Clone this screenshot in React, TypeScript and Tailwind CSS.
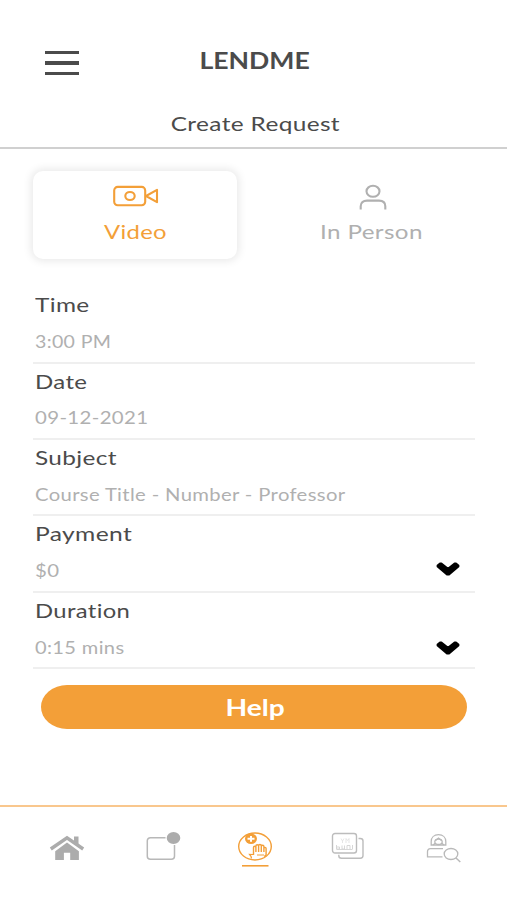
import React, { useState } from 'react';

const fields = [
  { label: 'Time', value: '3:00 PM', labelScale: 'scale-x-[1.22]', valueScale: 'scale-x-[1.15]', select: false, iconClass: '' },
  { label: 'Date', value: '09-12-2021', labelScale: 'scale-x-[1.2]', valueScale: 'scale-x-[1.2]', select: false, iconClass: '' },
  { label: 'Subject', value: 'Course Title - Number - Professor', labelScale: 'scale-x-[1.22]', valueScale: 'scale-x-[1.19]', select: false, iconClass: '' },
  { label: 'Payment', value: '$0', labelScale: 'scale-x-[1.23]', valueScale: 'scale-x-[1.2]', select: true, iconClass: 'mb-[4px]' },
  { label: 'Duration', value: '0:15 mins', labelScale: 'scale-x-[1.19]', valueScale: 'scale-x-[1.18]', select: true, iconClass: '' },
];

const VideoIcon = () => (
  <svg width="46" height="22" viewBox="0 0 46 22" fill="none" stroke="currentColor" strokeWidth="2.1" strokeLinejoin="round">
    <rect x="1.2" y="1.9" width="31" height="18.3" rx="3.5" />
    <ellipse cx="17" cy="11" rx="4.7" ry="4" />
    <path d="M33 11 44 4.800v12.400L33 11Z" />
  </svg>
);

const PersonIcon = () => (
  <svg width="28" height="27" viewBox="0 0 28 27" fill="none" stroke="currentColor" strokeWidth="2.1">
    <ellipse cx="14" cy="7.3" rx="6.5" ry="5.500" />
    <path d="M1.700 25.500v-3.200C1.700 18.700 4.200 16.600 8 16.600h12c3.800 0 6.300 2.100 6.300 5.700v3.200" />
  </svg>
);

const ChevronIcon = () => (
  <svg width="26" height="16" viewBox="0 0 26 16" fill="#000" stroke="#000" strokeWidth="2" strokeLinejoin="round">
    <path d="M2.600 4.500 5 2.600h1.400L13 7.800l6.600-5.200H21l2.400 1.900v1L14 13.600h-2L2.600 5.500z" />
  </svg>
);

const HomeIcon = () => (
  <svg width="36" height="26" viewBox="0 0 36 26" fill="#acacac">
    <path d="M25 1.500h4.500v9l-4.500-3.500z" />
    <path d="M1.800 14 18 2.900 34.200 14" fill="none" stroke="#acacac" strokeWidth="3.500" />
    <path d="m18 7.600 11.900 8.600V25h-8.700v-7.200h-6.300V25H6.200v-8.800z" />
  </svg>
);

const NoticeIcon = () => (
  <svg width="36" height="30" viewBox="0 0 36 30" fill="none" stroke="#b8b8b8" strokeWidth="1.500">
    <path d="M19.500 6.800H4.500C2.500 6.800 1.300 8 1.300 9.800v15.500c0 1.800 1.200 3 3.200 3h20.800c2 0 3.200-1.200 3.200-3V14" />
    <ellipse cx="27.500" cy="7" rx="6.800" ry="5.900" fill="#acacac" stroke="none" />
  </svg>
);

const HelpIcon = () => (
  <svg width="36" height="37" viewBox="0 0 36 37" fill="none" stroke="#f39f38" strokeWidth="1.400">
    <ellipse cx="18" cy="15.500" rx="16.300" ry="13.500" />
    <ellipse cx="14" cy="7.800" rx="6" ry="5.200" fill="#f39f38" stroke="none" />
    <path d="M10.500 7.800h7M14 4.900v5.800" stroke="#fff" strokeWidth="2" />
    <path d="M16.500 24v-7.500c0-1.600 2.400-1.600 2.400 0V21v-6c0-1.700 2.700-1.700 2.700 0v6-6.300c0-1.700 2.700-1.700 2.700 0V21v-5.600c0-1.600 2.600-1.600 2.600 0V21v-3.500c0-1.500 2.200-1.500 2.200 0V24l-2 1.500" />
    <path d="m16.500 23.500-4-.2 1.500 2 .5 2.200M20 24h7" strokeWidth="1.200" />
    <path d="M5 34.800h26.500" strokeWidth="1.600" />
  </svg>
);

const CardsIcon = () => (
  <svg width="34" height="28" viewBox="0 0 34 28" fill="none" stroke="#bcbcbc" strokeWidth="1.400">
    <rect x="1.500" y="1.500" width="24" height="19.500" rx="2.500" />
    <path d="M27.500 6.500h1.800c1.700 0 2.700 1 2.700 2.500v14.500c0 1.800-1 2.700-2.700 2.700H10.500c-1.700 0-2.700-.9-2.700-2.500v-1" />
    <path d="M10 6.500 11.500 9 13 6.500M11.500 9v2M15 11V6.500l1.500 2 1.500-2V11" stroke="#dedede" strokeWidth=".8" />
    <path d="M5.500 13v4M5.500 15h3v2h-3M11 13.500v3.500h2.500v-3.500M16 17v-3.500h3V17M21.500 13v4M5.500 17.500h16" stroke="#d2d2d2" strokeWidth=".9" />
  </svg>
);

const SearchPersonIcon = () => (
  <svg width="36" height="30" viewBox="0 0 36 30" fill="none" stroke="#b9b9b9" strokeWidth="1.300">
    <path d="M5.200 12V8.500C5.200 4.500 8 1.700 12.500 1.700S19.800 4.500 19.800 8.500V12z" />
    <ellipse cx="12.500" cy="8.800" rx="3.700" ry="2.700" />
    <path d="m9.500 7.500 3-2.500 3 2.500M7.200 12l2.200-2M17.800 12l-2.200-2" />
    <path d="M17 15.600H4.500c-2 0-3 1.300-3 3v5.200h15" />
    <ellipse cx="25" cy="21" rx="6.800" ry="5.500" />
    <path d="m30 25 4.300 4" strokeWidth="1.500" />
  </svg>
);

export default function App() {
  const [mode, setMode] = useState('video');

  return (
    <div className="flex h-[900px] w-[507px] flex-col overflow-hidden bg-white font-['Lato',sans-serif] text-[#4b4b4b]">
      <header className="flex h-[149px] flex-col border-b-2 border-[#d0d0d0]">
        <div className="mt-[45px] grid grid-cols-[1fr_auto_1fr] items-center">
          <button className="mt-[4px] ml-[45px] flex w-[34px] flex-col gap-[7px]">
            <span className="h-[3.400px] w-full bg-[#4b4b4b]" />
            <span className="h-[3.400px] w-full bg-[#4b4b4b]" />
            <span className="h-[3.400px] w-full bg-[#4b4b4b]" />
          </button>
          <h1 className="ml-[3px] scale-x-[1.21] text-[22px] leading-8 font-bold">LENDME</h1>
        </div>
        <div className="mt-[30px] flex justify-center">
          <h2 className="ml-[4px] scale-x-[1.22] text-[20px] leading-8 tracking-[0.3px]">Create Request</h2>
        </div>
      </header>

      <div className="mt-[22px] ml-[33px] flex h-[88px] gap-[33px]">
        <button
          onClick={() => setMode('video')}
          className={`flex w-[204px] flex-col items-center rounded-[10px] text-[#f39f38] ${mode === 'video' ? 'shadow-[0_0_9px_2px_rgba(0,0,0,0.09)]' : ''}`}
        >
          <span className="mt-[14px] ml-[2px]"><VideoIcon /></span>
          <span className="mt-[8px] scale-x-[1.19] text-[20px] leading-8 tracking-[0.3px]">Video</span>
        </button>
        <button
          onClick={() => setMode('person')}
          className={`flex w-[204px] flex-col items-center rounded-[10px] text-[#b0b0b0] ${mode === 'person' ? 'shadow-[0_0_9px_2px_rgba(0,0,0,0.09)]' : ''}`}
        >
          <span className="mt-[13px] ml-[2px]"><PersonIcon /></span>
          <span className="mt-[4px] -ml-[2px] scale-x-[1.21] text-[20px] leading-8 tracking-[0.3px]">In Person</span>
        </button>
      </div>

      <div className="mt-[28.300px] ml-[33px] w-[442px]">
        {fields.map((field) => (
          <div key={field.label} className="flex h-[76.400px] flex-col border-b-2 border-[#efefef] pl-[2px]">
            <div className="mt-[1px] flex">
              <span className={`origin-left text-[20px] leading-8 tracking-[0.3px] ${field.labelScale}`}>{field.label}</span>
            </div>
            <div className="mt-[7.700px] flex h-7 items-center justify-between">
              <span className={`origin-left text-[17px] leading-7 tracking-[0.3px] whitespace-nowrap text-[#b0b0b0] ${field.valueScale}`}>{field.value}</span>
              {field.select && <span className={`mr-[14px] ${field.iconClass}`}><ChevronIcon /></span>}
            </div>
          </div>
        ))}
      </div>

      <button className="mt-[16.200px] ml-[41px] flex h-[44px] w-[426px] items-center justify-center rounded-[26px/22px] bg-[#f39f38] text-white">
        <span className="mt-[2px] ml-[3px] scale-x-[1.28] text-[22px] leading-8 font-bold">Help</span>
      </button>

      <nav className="mt-auto flex h-[95px] items-start border-t-2 border-[#f9c78d]">
        <div className="mt-[28px] ml-[49px]"><HomeIcon /></div>
        <div className="mt-[24px] ml-[61px]"><NoticeIcon /></div>
        <div className="mt-[24px] ml-[55px]"><HelpIcon /></div>
        <div className="mt-[25px] ml-[58px]"><CardsIcon /></div>
        <div className="mt-[26px] ml-[61px]"><SearchPersonIcon /></div>
      </nav>
    </div>
  );
}
